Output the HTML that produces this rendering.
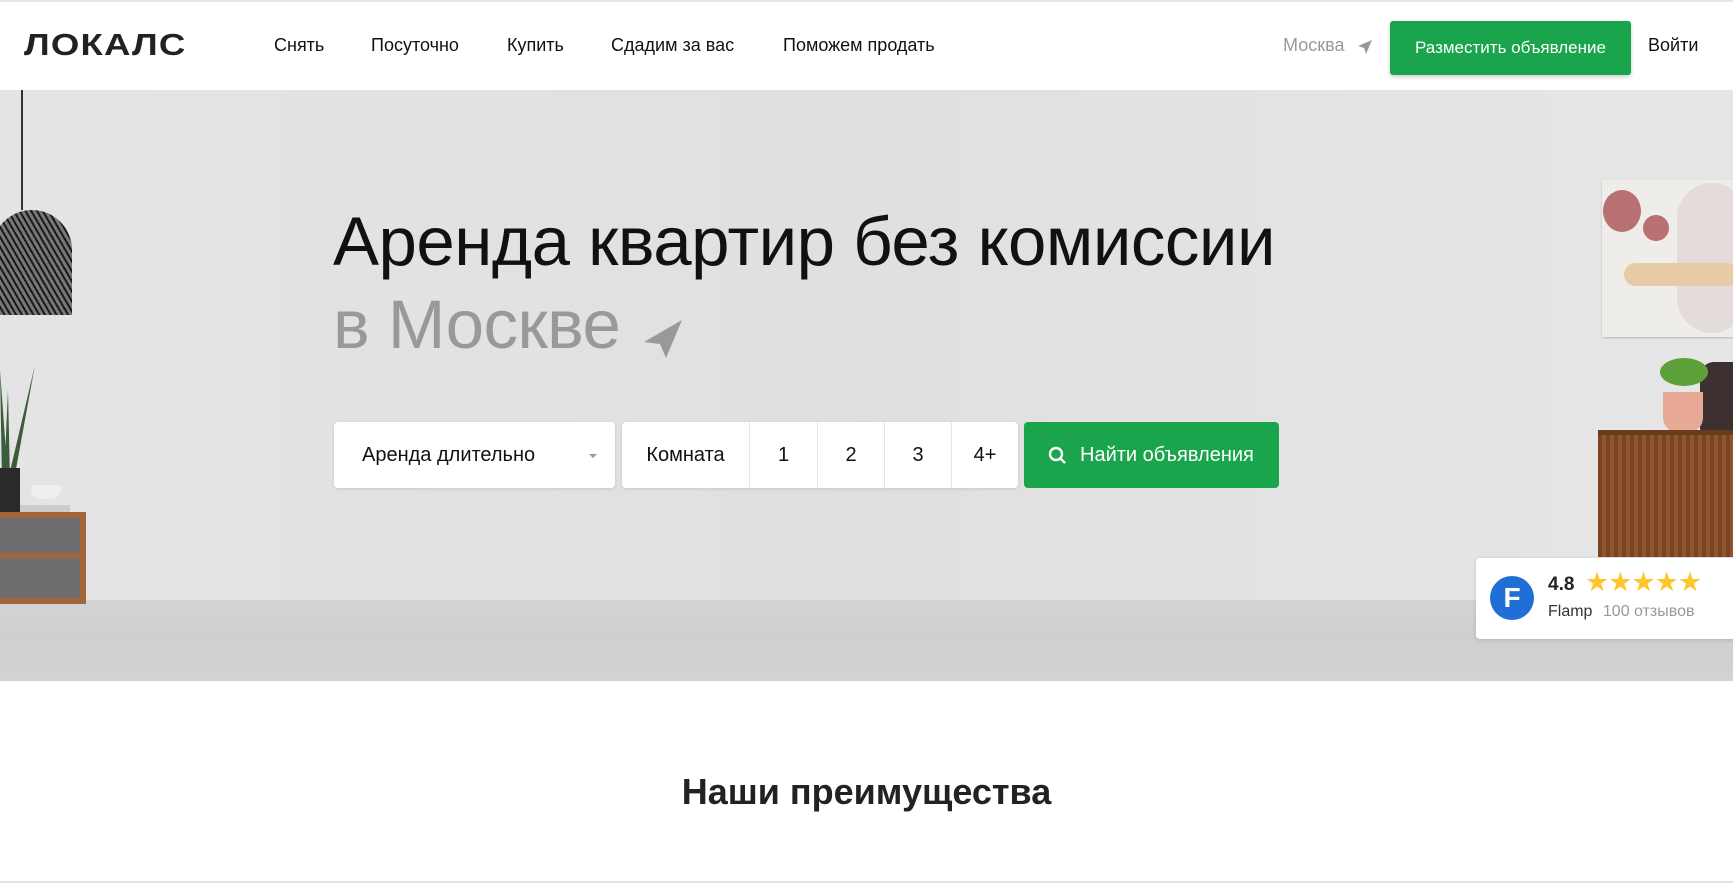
<!DOCTYPE html>
<html><head><meta charset="utf-8"><style>
*{margin:0;padding:0;box-sizing:border-box}
body{width:1733px;height:883px;overflow:hidden;background:#fff;font-family:"Liberation Sans",Arial,sans-serif;position:relative}
.a{position:absolute}
.hdr{top:0;left:0;width:1733px;height:90px;background:#fff;border-top:2px solid #dfe6ec}
.nav{font-size:18px;color:#111;top:33px}
.hero{top:90px;left:0;width:1733px;height:591px;background:linear-gradient(90deg,#e4e4e4,#e0e0e0 50%,#e6e6e6)}
.floor{top:600px;left:0;width:1733px;height:81px;background:linear-gradient(#d4d4d4,#cfcfcf 40%,#d2d2d2)}
.box{background:#fff;border-radius:4px;box-shadow:0 1px 3px rgba(0,0,0,.12)}
.cell{top:0;height:66px;line-height:66px;text-align:center;font-size:20px;color:#111;border-left:1px solid #e6e6e6}
</style></head><body>
<div class="a hdr">
 <div class="a" style="left:24px;top:25px;font-size:31px;font-weight:bold;letter-spacing:1px;color:#222;transform:scaleX(1.18);transform-origin:left">ЛОКАЛС</div>
 <div class="a nav" style="left:274px">Снять</div>
 <div class="a nav" style="left:371px">Посуточно</div>
 <div class="a nav" style="left:507px">Купить</div>
 <div class="a nav" style="left:611px">Сдадим за вас</div>
 <div class="a nav" style="left:783px">Поможем продать</div>
 <div class="a nav" style="left:1283px;color:#999">Москва</div>
 <svg class="a" style="left:1357px;top:37px" width="16" height="16" viewBox="0 0 16 16"><path d="M15 1L1 7l6 2 2 6z" fill="#999"/></svg>
 <div class="a" style="left:1390px;top:19px;width:241px;height:54px;background:#1aa44c;border-radius:3px;color:#fff;font-size:17px;line-height:54px;text-align:center;box-shadow:0 2px 4px rgba(0,0,0,.2)">Разместить объявление</div>
 <div class="a nav" style="left:1648px">Войти</div>
</div>
<div class="a hero"></div>
<div class="a floor"></div>
<div class="a" style="left:21px;top:90px;width:2px;height:120px;background:#333"></div>
<div class="a" style="left:-8px;top:210px;width:80px;height:105px;border-radius:40px 40px 0 0;background:repeating-linear-gradient(60deg,#1a1a1a 0 2px,#777 2px 5px)"></div>
<svg class="a" style="left:0;top:360px" width="40" height="120"><path d="M2 120L0 10 8 120M8 120L35 5 14 120M4 120L8 30 10 120" fill="#3d5c3a"/></svg>
<div class="a" style="left:0;top:468px;width:20px;height:46px;background:#2a2a2a"></div>
<div class="a" style="left:31px;top:485px;width:30px;height:14px;background:#eee;border-radius:0 0 10px 10px"></div>
<div class="a" style="left:20px;top:505px;width:50px;height:7px;background:#ccc"></div>
<div class="a" style="left:0;top:512px;width:86px;height:92px;border:6px solid #a0663a;border-left:none;background:#6d6d6d"></div>
<div class="a" style="left:0;top:553px;width:80px;height:5px;background:#a0663a"></div>
<div class="a" style="left:1602px;top:180px;width:140px;height:157px;background:#efedea;box-shadow:0 1px 2px rgba(0,0,0,.2)"></div>
<div class="a" style="left:1677px;top:183px;width:70px;height:150px;border-radius:35px;background:#e3dcda"></div>
<div class="a" style="left:1603px;top:190px;width:38px;height:42px;border-radius:50%;background:#b87070"></div>
<div class="a" style="left:1643px;top:215px;width:26px;height:26px;border-radius:50%;background:#b87070"></div>
<div class="a" style="left:1624px;top:263px;width:115px;height:23px;border-radius:12px;background:#e6cba6"></div>
<div class="a" style="left:1700px;top:362px;width:40px;height:72px;border-radius:14px 0 0 6px;background:#3e3030"></div>
<div class="a" style="left:1660px;top:358px;width:48px;height:28px;border-radius:50%;background:#5ea03a"></div>
<div class="a" style="left:1663px;top:392px;width:40px;height:40px;border-radius:0 0 14px 14px;background:#e8a996"></div>
<div class="a" style="left:1598px;top:430px;width:135px;height:127px;background:repeating-linear-gradient(90deg,#7a4420 0 4px,#8f5530 4px 8px);border-top:5px solid #6a3b1c"></div>
<div class="a" style="left:333px;top:202px;font-size:69px;letter-spacing:-0.5px;color:#111;white-space:nowrap">Аренда квартир без комиссии</div>
<div class="a" style="left:333px;top:285px;font-size:69px;letter-spacing:-0.5px;color:#999;white-space:nowrap">в Москве</div>
<svg class="a" style="left:642px;top:318px" width="42" height="42" viewBox="0 0 42 42"><path d="M40 2L2 24l16 2 6 14z" fill="#999"/></svg>
<div class="a box" style="left:334px;top:422px;width:281px;height:66px">
 <div class="a" style="left:28px;top:22px;font-size:20px;color:#111">Аренда длительно</div>
 <div class="a" style="left:255px;top:32px;border:4px solid transparent;border-top:4px solid #999"></div>
</div>
<div class="a box" style="left:622px;top:422px;width:396px;height:66px">
 <div class="a cell" style="left:0;width:127px;border:none">Комната</div>
 <div class="a cell" style="left:127px;width:68px">1</div>
 <div class="a cell" style="left:195px;width:67px">2</div>
 <div class="a cell" style="left:262px;width:67px">3</div>
 <div class="a cell" style="left:329px;width:67px">4+</div>
</div>
<div class="a" style="left:1024px;top:422px;width:255px;height:66px;background:#1aa44c;border-radius:4px;color:#fff;font-size:20px;line-height:66px">
 <svg class="a" style="left:24px;top:24px" width="19" height="19" viewBox="0 0 19 19"><circle cx="8" cy="8" r="6" stroke="#fff" stroke-width="2.4" fill="none"/><path d="M12.5 12.5L17 17" stroke="#fff" stroke-width="2.4"/></svg>
 <span class="a" style="left:56px;top:0">Найти объявления</span>
</div>
<div class="a" style="left:1476px;top:558px;width:270px;height:81px;background:#fff;border-radius:4px;box-shadow:0 1px 4px rgba(0,0,0,.15)">
 <div class="a" style="left:14px;top:18px;width:44px;height:44px;border-radius:50%;background:#1f6fd6;color:#fff;font-weight:bold;font-size:28px;line-height:44px;text-align:center">F</div>
 <div class="a" style="left:72px;top:16px;font-size:19px;font-weight:bold;color:#222">4.8</div>
 <div class="a" style="left:109px;top:9px;font-size:27px;color:#fdc62b;letter-spacing:-1px">★★★★★</div>
 <div class="a" style="left:72px;top:45px;font-size:16px;color:#333">Flamp <span style="color:#999;margin-left:6px">100 отзывов</span></div>
</div>
<div class="a" style="left:0;top:771px;width:1733px;text-align:center;font-size:36px;font-weight:bold;color:#222">Наши преимущества</div>
<div class="a" style="left:0;top:881px;width:1733px;height:2px;background:#dfe3e8"></div>
</body></html>
